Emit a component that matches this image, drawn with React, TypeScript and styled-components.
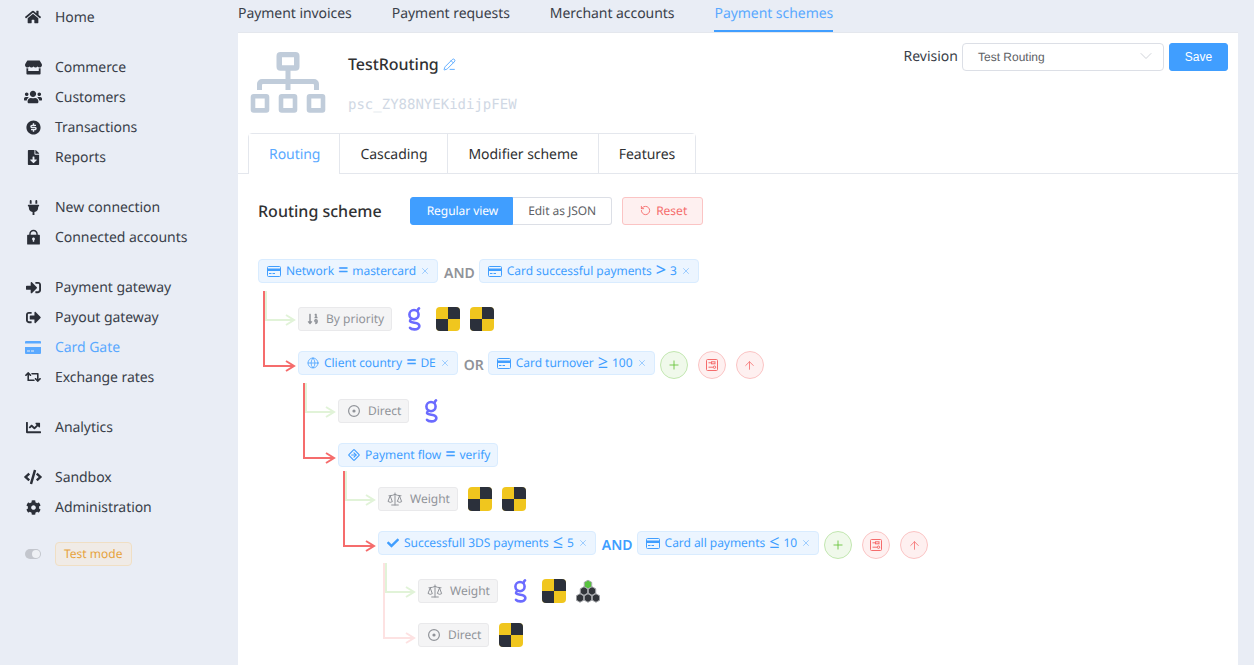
import React from "react";
import styled, { createGlobalStyle } from "styled-components";
import {
  FaHome,
  FaStore,
  FaUsers,
  FaFileDownload,
  FaPlug,
  FaSignInAlt,
  FaSignOutAlt,
  FaRetweet,
  FaChartLine,
  FaCode,
  FaCog,
  FaCheck,
  FaSortNumericDown,
} from "react-icons/fa";
import { RiLock2Fill, RiMoneyDollarCircleFill } from "react-icons/ri";
import { TbDirectionSign } from "react-icons/tb";
import {
  ArrowUp,
  ChevronDown,
  Globe,
  PencilLine,
  Plus,
  RotateCcw,
  Scale,
  X,
} from "lucide-react";

const GlobalStyle = createGlobalStyle`
  html, body {
    margin: 0;
    padding: 0;
    background: #e9edf5;
    font-family: "Noto Sans", "Open Sans", sans-serif;
    color: #303133;
    text-rendering: geometricPrecision;
  }
  * {
    box-sizing: border-box;
  }
`;

const Layout = styled.div`
  display: flex;
  width: 1254px;
  height: 665px;
  overflow: hidden;
`;

const Sidebar = styled.aside`
  width: 238px;
  flex: none;
  padding: 2px 0 0 24px;
  display: flex;
  flex-direction: column;
  gap: 20px;
`;

const MenuGroup = styled.div`
  display: flex;
  flex-direction: column;
`;

const MenuItem = styled.div<{ $active?: boolean }>`
  display: flex;
  align-items: center;
  height: 30px;
  font-size: 14px;
  letter-spacing: -0.05px;
  color: ${(p) => (p.$active ? "#5aa9ff" : "#3a3f4a")};
`;

const MenuIcon = styled.span`
  width: 18px;
  margin-right: 13px;
  display: flex;
  justify-content: center;
  color: #2b2f38;
  svg {
    display: block;
  }
`;

const TestRow = styled.div`
  display: flex;
  align-items: center;
  height: 24px;
`;

const Toggle = styled.span`
  width: 16px;
  height: 10px;
  margin: 0 14px 0 1px;
  border-radius: 5px;
  background: #c3c6cd;
  position: relative;
  &::after {
    content: "";
    position: absolute;
    right: 1px;
    top: 1px;
    width: 8px;
    height: 8px;
    border-radius: 50%;
    background: #eef0f4;
  }
`;

const TestBadge = styled.span`
  height: 24px;
  padding: 0 9px 2px 8px;
  display: flex;
  align-items: center;
  font-size: 12px;
  color: #e6a23c;
  background: #f0ebe6;
  border: 1px solid #f0dfc4;
  border-radius: 4px;
`;

const Main = styled.main`
  flex: 1;
  display: flex;
  flex-direction: column;
  min-width: 0;
`;

const TopNav = styled.nav`
  height: 33px;
  display: flex;
  gap: 40px;
  border-bottom: 1px solid #e4e7ed;
  width: 1000px;
`;

const TopLink = styled.div<{ $active?: boolean }>`
  height: 32px;
  padding-top: 4px;
  font-size: 14px;
  line-height: 20px;
  letter-spacing: -0.05px;
  color: ${(p) => (p.$active ? "#5aa9ff" : "#3a3f4a")};
  border-bottom: 2px solid ${(p) => (p.$active ? "#409eff" : "transparent")};
`;

const Card = styled.section`
  width: 1000px;
  flex: 1;
  background: #fff;
`;

const Header = styled.header`
  height: 100px;
  padding: 10px 10px 0 12px;
  display: flex;
`;

const SchemeIcon = styled.svg`
  width: 76px;
  height: 62px;
  margin: 9px 22px 0 0;
  flex: none;
`;

const TitleBlock = styled.div`
  flex: 1;
  display: flex;
  flex-direction: column;
`;

const TitleRow = styled.div`
  display: flex;
  align-items: center;
  gap: 4px;
  height: 22px;
  margin-top: 10px;
`;

const Title = styled.h1`
  margin: 0;
  font-size: 16px;
  font-weight: 500;
  letter-spacing: -0.05px;
  color: #303133;
`;

const SchemeId = styled.div`
  margin-top: 20px;
  font-family: "DejaVu Sans Mono", "Liberation Mono", monospace;
  font-size: 14px;
  line-height: 20px;
  color: #d0d8e4;
`;

const RevisionBlock = styled.div`
  display: flex;
  align-items: center;
  height: 28px;
`;

const RevisionLabel = styled.span`
  font-size: 14px;
  margin-right: 4px;
  padding-bottom: 2px;
  color: #3a3f4a;
`;

const Select = styled.div`
  width: 202px;
  height: 28px;
  padding: 0 15px;
  display: flex;
  align-items: center;
  justify-content: space-between;
  background: #fff;
  border: 1px solid #dcdfe6;
  border-radius: 4px;
  font-family: "Liberation Sans", Arial, sans-serif;
  font-size: 12px;
  color: #606266;
  margin-right: 5px;
  svg {
    color: #c0c4cc;
    margin: 0 -8px 2px 0;
  }
`;

const SaveButton = styled.button`
  width: 59px;
  height: 28px;
  padding: 0;
  background: #409eff;
  border: 1px solid #409eff;
  border-radius: 3px;
  color: #fff;
  font-family: "Liberation Sans", Arial, sans-serif;
  font-size: 12px;
`;

const Tabs = styled.div`
  height: 41px;
  padding-left: 10px;
  display: flex;
  border-bottom: 1px solid #e4e7ed;
`;

const TabList = styled.div`
  display: flex;
  height: 41px;
  border: 1px solid #e4e7ed;
  border-radius: 4px 4px 0 0;
`;

const Tab = styled.div<{ $active?: boolean }>`
  height: 40px;
  padding: 2px 20px 0;
  display: flex;
  align-items: center;
  font-size: 14px;
  letter-spacing: -0.05px;
  color: ${(p) => (p.$active ? "#5aa9ff" : "#303133")};
  background: #fff;
  border-left: 1px solid #e4e7ed;
  border-bottom: 1px solid ${(p) => (p.$active ? "#fff" : "#e4e7ed")};
  &:first-child {
    border-left: none;
    padding-right: 19px;
  }
`;

const Body = styled.div`
  padding: 23px 20px 0;
`;

const SchemeBar = styled.div`
  display: flex;
  align-items: center;
  height: 28px;
  margin-bottom: 34px;
`;

const SchemeHeading = styled.h2`
  margin: 0 28px 0 0;
  font-size: 16px;
  font-weight: 500;
  color: #303133;
`;

const ViewButton = styled.div<{ $active?: boolean; $side: "left" | "right" }>`
  height: 28px;
  padding: ${(p) => (p.$active ? "0 14px 2px 16px" : "0 15px 2px")};
  display: flex;
  align-items: center;
  font-size: 12px;
  letter-spacing: -0.05px;
  color: ${(p) => (p.$active ? "#fff" : "#606266")};
  background: ${(p) => (p.$active ? "#409eff" : "#fff")};
  border: 1px solid ${(p) => (p.$active ? "#409eff" : "#dcdfe6")};
  border-left-width: ${(p) => (p.$side === "right" ? 0 : 1)}px;
  border-radius: ${(p) => (p.$side === "left" ? "3px 0 0 3px" : "0 3px 3px 0")};
`;

const ResetButton = styled.div`
  height: 28px;
  margin-left: 10px;
  padding: 0 15px 2px 17px;
  display: flex;
  align-items: center;
  gap: 5px;
  font-size: 12px;
  color: #f56c6c;
  background: #fef0f0;
  border: 1px solid #fbc4c4;
  border-radius: 3px;
`;

const Node = styled.div`
  display: flex;
  flex-direction: column;
  gap: 20px;
`;

const Children = styled.div`
  margin-left: 40px;
  display: flex;
  flex-direction: column;
  gap: 20px;
`;

const Branch = styled.div`
  position: relative;
`;

const Connector = styled.svg`
  position: absolute;
  left: -36px;
  top: -60px;
  width: 36px;
  height: 84px;
  overflow: visible;
  pointer-events: none;
`;

const Row = styled.div<{ $tall?: boolean }>`
  display: flex;
  align-items: flex-start;
  min-height: ${(p) => (p.$tall ? 28 : 24)}px;
`;

const Chip = styled.div`
  height: 24px;
  padding: 0 7px 0 8px;
  display: flex;
  align-items: center;
  gap: 5px;
  font-size: 12px;
  white-space: nowrap;
  color: #409eff;
  background: #ecf5ff;
  border: 1px solid #d9ecff;
  border-radius: 4px;
  svg {
    flex: none;
  }
`;

const ChipText = styled.span`
  display: flex;
  align-items: center;
  gap: 4px;
  margin-top: -2px;
  letter-spacing: -0.04px;
`;

const Operator = styled.span`
  font-size: 18px;
  line-height: 20px;
  font-weight: 500;
`;

const ChipClose = styled(X)`
  margin-left: -1px;
  opacity: 0.55;
`;

const FlowIcon = styled(TbDirectionSign)`
  margin-right: -1px;
`;

const Joiner = styled.span<{ $blue?: boolean }>`
  height: 24px;
  margin: 2px 4px 0 6px;
  display: flex;
  align-items: center;
  font-size: 14px;
  font-weight: 600;
  color: ${(p) => (p.$blue ? "#409eff" : "#909399")};
`;

const StrategyTag = styled.div`
  height: 24px;
  padding: 0 7px 0 8px;
  display: flex;
  align-items: center;
  gap: 7px;
  font-size: 12px;
  color: #909399;
  background: #f4f4f5;
  border: 1px solid #e9e9eb;
  border-radius: 3px;
`;

const StrategyLabel = styled.span`
  margin-top: -2px;
`;

const Logos = styled.div`
  display: flex;
  gap: 10px;
  margin-left: 10px;
`;

const LogoBox = styled.svg`
  width: 24px;
  height: 24px;
  display: block;
`;

const Actions = styled.div`
  display: flex;
  gap: 10px;
  margin-left: 5px;
`;

const RoundButton = styled.div<{ $tone: "success" | "danger" }>`
  width: 28px;
  height: 28px;
  border-radius: 50%;
  display: flex;
  align-items: center;
  justify-content: center;
  color: ${(p) => (p.$tone === "success" ? "#67c23a" : "#f56c6c")};
  background: ${(p) => (p.$tone === "success" ? "#f0f9eb" : "#fef0f0")};
  border: 1px solid ${(p) => (p.$tone === "success" ? "#c2e7b0" : "#fbc4c4")};
`;

const CardGlyph = ({ size = 14 }: { size?: number }) => (
  <svg width={size} height={(size * 11) / 14} viewBox="0 0 14 11" fill="none">
    <rect x="0.5" y="0.5" width="13" height="10" rx="1" stroke="currentColor" />
    <rect x="0.5" y="2.5" width="13" height="2.5" fill="currentColor" />
    <rect x="2" y="7" width="2.5" height="1" fill="currentColor" />
    <rect x="5.5" y="7" width="2.5" height="1" fill="currentColor" />
  </svg>
);

const SidebarCard = () => (
  <svg width="16" height="13" viewBox="0 0 16 13">
    <path d="M1 0h14a1 1 0 0 1 1 1v1.5H0V1a1 1 0 0 1 1-1z" fill="#5aa9ff" />
    <path
      d="M0 6h16v6a1 1 0 0 1-1 1H1a1 1 0 0 1-1-1z M2 9.5v1h3v-1z M6 9.5v1h3v-1z"
      fill="#5aa9ff"
      fillRule="evenodd"
    />
  </svg>
);

const DirectIcon = () => (
  <svg width="14" height="14" viewBox="0 0 14 14" fill="none" stroke="currentColor">
    <circle cx="7" cy="7" r="5.4" strokeWidth="1.2" />
    <circle cx="7" cy="7" r="1.6" fill="currentColor" stroke="none" />
  </svg>
);

const GLogo = () => (
  <LogoBox viewBox="0 0 24 24" fill="none" stroke="#6b6bff" strokeWidth="2.6" strokeLinecap="round">
    <circle cx="12" cy="7.6" r="4.6" />
    <path d="M15.6 3.8c.3-1.2.8-2 1.4-2.4" />
    <path d="M9.4 12c-1.2.8-1.6 1.4-1.4 2.2.3 1 1.8 1.2 4.2 1.5 3 .4 5.2 1.2 5.2 3.4 0 2.4-2.4 3.4-5 3.3-2-.1-3.6-.7-4.4-1.6" />
  </LogoBox>
);

const CheckerLogo = () => (
  <LogoBox viewBox="0 0 24 24">
    <rect width="24" height="24" rx="4" fill="#f0c61e" />
    <path d="M12 0h8a4 4 0 0 1 4 4v8H12z" fill="#2b303b" />
    <path d="M0 12h12v12H4a4 4 0 0 1-4-4z" fill="#2b303b" />
  </LogoBox>
);

// bottom row first so the green hexagon ends up painted on top
const hexCells = [
  { x: 4, y: 19, fill: "#33363b" },
  { x: 12, y: 19, fill: "#33363b" },
  { x: 20, y: 19, fill: "#33363b" },
  { x: 8, y: 12, fill: "#33363b" },
  { x: 16, y: 12, fill: "#33363b" },
  { x: 12, y: 5.5, fill: "#57c23e" },
];

const hexPoints = (x: number, y: number, r: number) =>
  [0, 1, 2, 3, 4, 5]
    .map((i) => {
      const a = (Math.PI / 3) * i - Math.PI / 2;
      return `${x + r * Math.cos(a)},${y + r * Math.sin(a)}`;
    })
    .join(" ");

const HiveLogo = () => (
  <LogoBox viewBox="0 0 24 24">
    {hexCells.map((c) => (
      <polygon key={`${c.x}-${c.y}`} points={hexPoints(c.x, c.y, 4.3)} fill={c.fill} stroke="#a8aaae" strokeWidth="1" />
    ))}
  </LogoBox>
);

const logos = { g: GLogo, checker: CheckerLogo, hive: HiveLogo };

const SchemeGlyph = () => (
  <SchemeIcon viewBox="0 0 76 62" fill="#c0ccda">
    <path
      fillRule="evenodd"
      d="M30.5 0h15a4 4 0 0 1 4 4v10.7a4 4 0 0 1-4 4h-5V27H64a5 5 0 0 1 5 5v6h-5v-5a1 1 0 0 0-1-1H40.500v6h-5v-6H13a1 1 0 0 0-1 1v5H7v-6a5 5 0 0 1 5-5h23.500v-8.300h-5a4 4 0 0 1-4-4V4a4 4 0 0 1 4-4z M32 5.300v8h12v-8z"
    />
    {[0.7, 28.7, 56.7].map((x) => (
      <path
        key={x}
        fillRule="evenodd"
        d={`M${x + 3} 42h12.600a3 3 0 0 1 3 3v12.700a3 3 0 0 1-3 3h-12.600a3 3 0 0 1-3-3v-12.700a3 3 0 0 1 3-3z M${x + 4.6} 46.600v9.400h9.400v-9.400z`}
      />
    ))}
  </SchemeIcon>
);

const PanelIcon = () => (
  <svg width="14" height="14" viewBox="0 0 14 14" fill="none" stroke="currentColor">
    <rect x="1.5" y="1.5" width="11" height="11" rx="1" />
    <path d="M3.5 4.800h3" />
    <rect x="6.500" y="3.800" width="3.500" height="2" />
    <path d="M3.500 9.200h4.500" />
    <circle cx="9.500" cy="9.200" r="1.200" />
  </svg>
);

const Arrow = ({ kind, faded }: { kind: "then" | "else"; faded?: boolean }) => {
  const isThen = kind === "then";
  const color = isThen ? "#e1f3d8" : faded ? "#fde2e2" : "#f56c6c";
  const lineX = isThen ? 4 : 2;
  const lineY = isThen ? 73 : 75;
  return (
    <Connector viewBox="0 0 36 84" fill="none" stroke={color} strokeWidth="2">
      <path d={`M${lineX} ${isThen ? 44 : 0}V${lineY}H32`} />
      <path d={`M24 ${lineY - 5}L32 ${lineY}L24 ${lineY + 5}`} />
    </Connector>
  );
};

const menu = [
  [{ label: "Home", icon: <FaHome size={16} /> }],
  [
    { label: "Commerce", icon: <FaStore size={17} /> },
    { label: "Customers", icon: <FaUsers size={18} /> },
    { label: "Transactions", icon: <RiMoneyDollarCircleFill size={17} /> },
    { label: "Reports", icon: <FaFileDownload size={15} /> },
  ],
  [
    { label: "New connection", icon: <FaPlug size={15} /> },
    { label: "Connected accounts", icon: <RiLock2Fill size={17} /> },
  ],
  [
    { label: "Payment gateway", icon: <FaSignInAlt size={15} /> },
    { label: "Payout gateway", icon: <FaSignOutAlt size={15} /> },
    { label: "Card Gate", icon: <SidebarCard />, active: true },
    { label: "Exchange rates", icon: <FaRetweet size={16} /> },
  ],
  [{ label: "Analytics", icon: <FaChartLine size={15} /> }],
  [
    { label: "Sandbox", icon: <FaCode size={18} /> },
    { label: "Administration", icon: <FaCog size={15} /> },
  ],
];

type Condition = { icon: React.ReactNode; name: string; op: string; value: string; closable?: boolean };

const Conditions = ({ items, joiner, blue }: { items: Condition[]; joiner?: string; blue?: boolean }) => (
  <>
    {items.map((c, i) => (
      <React.Fragment key={c.name}>
        {i > 0 && <Joiner $blue={blue}>{joiner}</Joiner>}
        <Chip>
          {c.icon}
          <ChipText>
            {c.name} <Operator>{c.op}</Operator> {c.value}
          </ChipText>
          {c.closable !== false && <ChipClose size={10} />}
        </Chip>
      </React.Fragment>
    ))}
  </>
);

const RowActions = () => (
  <Actions>
    <RoundButton $tone="success">
      <Plus size={14} strokeWidth={1.5} />
    </RoundButton>
    <RoundButton $tone="danger">
      <PanelIcon />
    </RoundButton>
    <RoundButton $tone="danger">
      <ArrowUp size={13} strokeWidth={1.5} />
    </RoundButton>
  </Actions>
);

const Strategy = ({ icon, label, items }: { icon: React.ReactNode; label: string; items: (keyof typeof logos)[] }) => (
  <Row>
    <StrategyTag>
      {icon}
      <StrategyLabel>{label}</StrategyLabel>
    </StrategyTag>
    <Logos>
      {items.map((name, i) => {
        const Logo = logos[name];
        return <Logo key={i} />;
      })}
    </Logos>
  </Row>
);

const App = () => (
  <>
    <GlobalStyle />
    <Layout>
      <Sidebar>
        {menu.map((group, i) => (
          <MenuGroup key={i}>
            {group.map((item) => (
              <MenuItem key={item.label} $active={item.active}>
                <MenuIcon>{item.icon}</MenuIcon>
                {item.label}
              </MenuItem>
            ))}
          </MenuGroup>
        ))}
        <TestRow>
          <Toggle />
          <TestBadge>Test mode</TestBadge>
        </TestRow>
      </Sidebar>
      <Main>
        <TopNav>
          <TopLink>Payment invoices</TopLink>
          <TopLink>Payment requests</TopLink>
          <TopLink>Merchant accounts</TopLink>
          <TopLink $active>Payment schemes</TopLink>
        </TopNav>
        <Card>
          <Header>
            <SchemeGlyph />
            <TitleBlock>
              <TitleRow>
                <Title>TestRouting</Title>
                <PencilLine size={13} color="#5aa9ff" strokeWidth={1.75} />
              </TitleRow>
              <SchemeId>psc_ZY88NYEKidijpFEW</SchemeId>
            </TitleBlock>
            <RevisionBlock>
              <RevisionLabel>Revision</RevisionLabel>
              <Select>
                Test Routing
                <ChevronDown size={20} strokeWidth={0.9} />
              </Select>
              <SaveButton>Save</SaveButton>
            </RevisionBlock>
          </Header>
          <Tabs>
            <TabList>
              <Tab $active>Routing</Tab>
              <Tab>Cascading</Tab>
              <Tab>Modifier scheme</Tab>
              <Tab>Features</Tab>
            </TabList>
          </Tabs>
          <Body>
            <SchemeBar>
              <SchemeHeading>Routing scheme</SchemeHeading>
              <ViewButton $active $side="left">
                Regular view
              </ViewButton>
              <ViewButton $side="right">Edit as JSON</ViewButton>
              <ResetButton>
                <RotateCcw size={11} />
                Reset
              </ResetButton>
            </SchemeBar>
            <Node>
              <Row $tall>
                <Conditions
                  joiner="AND"
                  items={[
                    { icon: <CardGlyph />, name: "Network", op: "=", value: "mastercard" },
                    { icon: <CardGlyph />, name: "Card successful payments", op: ">", value: "3" },
                  ]}
                />
              </Row>
              <Children>
                <Branch>
                  <Arrow kind="then" />
                  <Strategy icon={<FaSortNumericDown size={12} />} label="By priority" items={["g", "checker", "checker"]} />
                </Branch>
                <Branch>
                  <Arrow kind="else" />
                  <Node>
                    <Row $tall>
                      <Conditions
                        joiner="OR"
                        items={[
                          { icon: <Globe size={12} strokeWidth={1.5} />, name: "Client country", op: "=", value: "DE" },
                          { icon: <CardGlyph />, name: "Card turnover", op: "≥", value: "100" },
                        ]}
                      />
                      <RowActions />
                    </Row>
                    <Children>
                      <Branch>
                        <Arrow kind="then" />
                        <Strategy icon={<DirectIcon />} label="Direct" items={["g"]} />
                      </Branch>
                      <Branch>
                        <Arrow kind="else" />
                        <Node>
                          <Row>
                            <Conditions
                              items={[
                                { icon: <FlowIcon size={14} />, name: "Payment flow", op: "=", value: "verify", closable: false },
                              ]}
                            />
                          </Row>
                          <Children>
                            <Branch>
                              <Arrow kind="then" />
                              <Strategy icon={<Scale size={16} strokeWidth={1.5} />} label="Weight" items={["checker", "checker"]} />
                            </Branch>
                            <Branch>
                              <Arrow kind="else" />
                              <Node>
                                <Row $tall>
                                  <Conditions
                                    joiner="AND"
                                    blue
                                    items={[
                                      { icon: <FaCheck size={12} />, name: "Successfull 3DS payments", op: "≤", value: "5" },
                                      { icon: <CardGlyph />, name: "Card all payments", op: "≤", value: "10" },
                                    ]}
                                  />
                                  <RowActions />
                                </Row>
                                <Children>
                                  <Branch>
                                    <Arrow kind="then" />
                                    <Strategy icon={<Scale size={16} strokeWidth={1.5} />} label="Weight" items={["g", "checker", "hive"]} />
                                  </Branch>
                                  <Branch>
                                    <Arrow kind="else" faded />
                                    <Strategy icon={<DirectIcon />} label="Direct" items={["checker"]} />
                                  </Branch>
                                </Children>
                              </Node>
                            </Branch>
                          </Children>
                        </Node>
                      </Branch>
                    </Children>
                  </Node>
                </Branch>
              </Children>
            </Node>
          </Body>
        </Card>
      </Main>
    </Layout>
  </>
);

export default App;
